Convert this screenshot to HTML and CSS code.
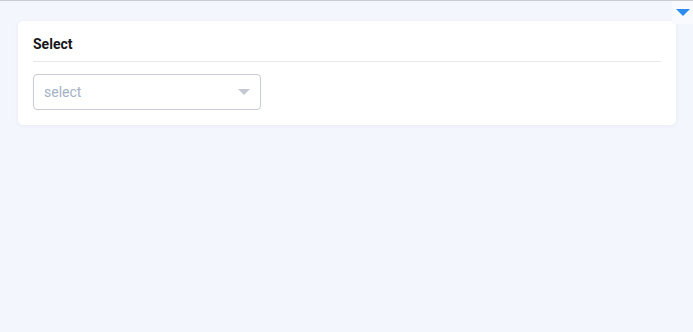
FILE: index.html
```html
<!DOCTYPE html>
<html lang="en">
<head>
  <meta charset="UTF-8">
  <title>Select</title>
  <link rel="stylesheet" href="styles.css">
</head>
<body>
  <div class="topbar"></div>
  <div class="corner-toggle">
    <svg width="14" height="8" viewBox="0 0 14 8"><path d="M0 0 L14 0 L7 7 Z" fill="#2d8cf0"/></svg>
  </div>

  <div class="page">
    <div class="card">
      <div class="card-head">Select</div>
      <div class="card-body">
        <div class="select">
          <span class="placeholder">select</span>
          <svg class="arrow" width="12" height="7" viewBox="0 0 12 7"><path d="M0 0 L12 0 L6 6 Z" fill="#c3c9d3"/></svg>
        </div>
      </div>
    </div>
  </div>
</body>
</html>
```

FILE: styles.css
```css
html, body {
  margin: 0;
  padding: 0;
}

body {
  background-color: #f3f6fd;
  font-family: Roboto, "Liberation Sans", sans-serif;
  font-size: 14px;
  height: 332px;
  position: relative;
}

.topbar {
  height: 1px;
  background-color: #c9ccd1;
}

/* little toggle in the top right corner */
.corner-toggle {
  position: absolute;
  top: 1px;
  right: 0;
  width: 21px;
  height: 23px;
  background-color: #f8fafe;
  display: flex;
  justify-content: center;
  padding-top: 8px;
  box-sizing: border-box;
}

.corner-toggle svg {
  display: block;
}

.page {
  padding: 20px 17px 0 18px;
}

.card {
  background-color: #fff;
  border-radius: 5px;
  box-shadow: 0 1px 4px rgba(0, 30, 90, 0.05);
  padding: 0 15px 15px;
}

.card-head {
  padding: 13px 0 7px;
  line-height: 20px;
  font-weight: bold;
  color: #17171a;
  border-bottom: 1px solid #e5e7eb;
}

.card-body {
  padding-top: 12px;
}

.select {
  width: 228px;
  height: 36px;
  box-sizing: border-box;
  border: 1px solid #c5cbd7;
  border-radius: 4px;
  display: flex;
  align-items: center;
  justify-content: space-between;
  padding: 0 10px 0 10px;
}

.placeholder {
  color: #a5b0c6;
  font-size: 14px;
}

.arrow {
  display: block;
  margin-top: 1px;
}
```
